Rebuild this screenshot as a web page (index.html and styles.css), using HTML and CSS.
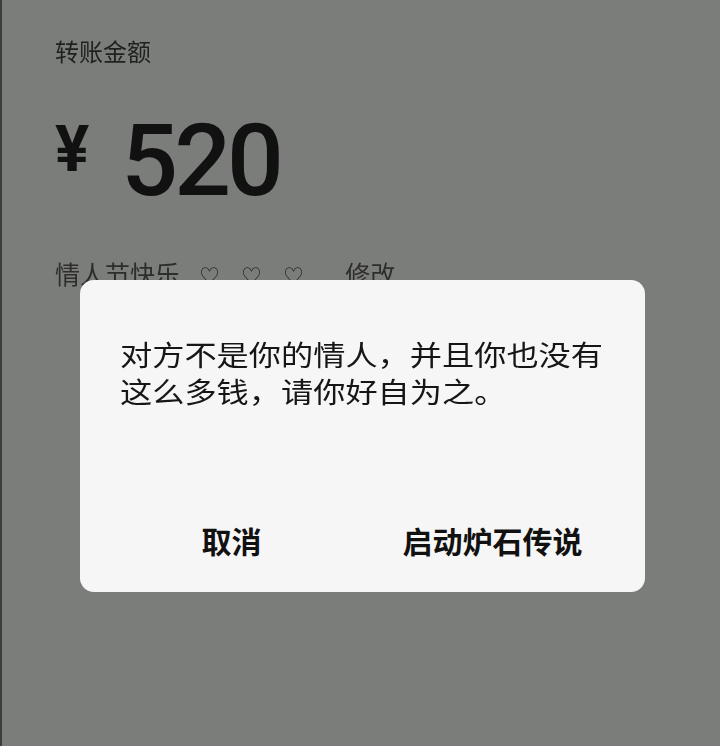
FILE: index.html
```html
<!DOCTYPE html>
<html lang="zh-CN">
<head>
    <meta charset="UTF-8">
    <meta name="viewport" content="width=device-width, initial-scale=1.0">
    <title>转账</title>
    <link rel="stylesheet" href="styles.css">
</head>
<body>
    <div class="screen">
        <div class="transfer">
            <p class="label">转账金额</p>
            <div class="amount">
                <span class="yen">¥</span>
                <span class="num">520</span>
            </div>
            <p class="note">情人节快乐 <span class="faint">♡♡♡</span> 修改</p>
        </div>

        <!-- confirm dialog over the transfer page -->
        <div class="dialog">
            <p class="message">对方不是你的情人，并且你也没有<br>这么多钱，请你好自为之。</p>
            <div class="actions">
                <button class="btn btn-cancel">取消</button>
                <button class="btn btn-ok">启动炉石传说</button>
            </div>
        </div>
    </div>
</body>
</html>
```

FILE: styles.css
```css
body {
    margin: 0;
    background-color: #7b7d7a;
    font-family: "Noto Sans CJK SC", "Noto Sans", sans-serif;
}
.screen {
    position: relative;
    width: 720px;
    height: 746px;
    box-sizing: border-box;
    border-left: 2px solid #3c3d3c;
    overflow: hidden;
}
.transfer {
    padding: 36px 0 0 53px;
}
.label {
    margin: 0;
    font-size: 24px;
    line-height: 30px;
    color: #1f201f;
    filter: blur(0.5px);
}
.amount {
    display: flex;
    align-items: center;
    margin-top: 44px;
    height: 100px;
}
.yen {
    font-family: Roboto, "Liberation Sans", sans-serif;
    font-size: 64px;
    font-weight: bold;
    color: #111;
    margin-right: 32px;
    margin-top: -22px;
}
.num {
    font-family: Roboto, "Liberation Sans", sans-serif;
    font-size: 100px;
    font-weight: 500;
    letter-spacing: -4px;
    color: #111;
}
.note {
    margin: 48px 0 0;
    font-size: 25px;
    line-height: 30px;
    color: #2c2d2c;
    filter: blur(0.6px);
}
.faint {
    margin: 0 14px;
    letter-spacing: 22px;
    font-size: 20px;
}
.dialog {
    position: absolute;
    left: 78px;
    top: 280px;
    width: 565px;
    height: 312px;
    box-sizing: border-box;
    background-color: #f6f6f6;
    border-radius: 14px;
    display: flex;
    flex-direction: column;
    justify-content: space-between;
    padding: 56px 20px 12px 40px;
}
.message {
    margin: 0;
    font-size: 28px;
    line-height: 37px;
    color: #161616;
    white-space: nowrap;
    transform: scaleX(1.15);
    transform-origin: left top;
}
.actions {
    display: grid;
    grid-template-columns: 261px 261px;
    margin-left: -19px;
}
.btn {
    height: 80px;
    border: none;
    background: none;
    font-family: inherit;
    font-size: 30px;
    font-weight: bold;
    color: #111;
    padding: 0;
}
```
